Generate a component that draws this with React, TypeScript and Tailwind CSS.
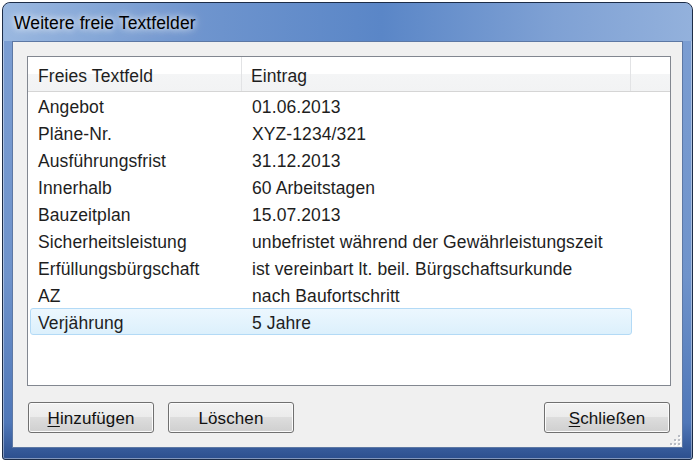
import React from 'react';

const rows: [string, string][] = [
  ['Angebot', '01.06.2013'],
  ['Pläne-Nr.', 'XYZ-1234/321'],
  ['Ausführungsfrist', '31.12.2013'],
  ['Innerhalb', '60 Arbeitstagen'],
  ['Bauzeitplan', '15.07.2013'],
  ['Sicherheitsleistung', 'unbefristet während der Gewährleistungszeit'],
  ['Erfüllungsbürgschaft', 'ist vereinbart lt. beil. Bürgschaftsurkunde'],
  ['AZ', 'nach Baufortschritt'],
  ['Verjährung', '5 Jahre'],
];

function DialogButton({ children, className = '' }: { children: React.ReactNode; className?: string }) {
  return (
    <button
      type="button"
      className={
        'w-[126px] h-[31px] rounded-[3px] border border-[#707070] shadow-[inset_0_0_0_1px_#fbfbfb] ' +
        'bg-[linear-gradient(to_bottom,#f2f2f2_0%,#ebebeb_50%,#dddddd_50%,#cfcfcf_100%)] ' +
        'flex items-center justify-center pt-[2px] text-[17px] tracking-[0.1px] text-[#111] ' +
        className
      }
    >
      {children}
    </button>
  );
}

export default function App() {
  return (
    <div className="w-[695px] h-[462px] bg-white p-[2px] font-['Liberation_Sans',Arial,sans-serif] text-[#1e1e1e]">
      <div className="w-[691px] h-[458px] rounded-t-[8px] rounded-b-[3px] border border-[#1c2c47] bg-[linear-gradient(to_bottom,#7d9fd3_0%,#6f93cb_60%,#4f77b8_92%,#2c4f8e_100%)] shadow-[inset_0_0_0_1px_rgba(255,255,255,0.4)] flex flex-col overflow-hidden">
        {/* title bar */}
        <div className="h-[38px] shrink-0 flex items-center pl-[11px] pt-[2px] rounded-t-[7px] bg-[linear-gradient(to_right,#9ab8e0_0%,#6f95ce_28%,#5a86c7_55%,#7fa1d4_80%,#93b1dc_100%)]">
          <span className="text-[17.5px] tracking-[0.1px] text-black [text-shadow:0_0_6px_rgba(255,255,255,0.95),0_0_12px_rgba(255,255,255,0.7)]">
            Weitere freie Textfelder
          </span>
        </div>

        {/* client area */}
        <div className="relative mx-[9px] h-[407px] border border-[#5d78a4] bg-[#f0f0f0] pt-[14px] pl-[14px] pr-[11px] flex flex-col">
          <div className="h-[330px] border border-[#828790] bg-white flex flex-col">
            {/* header */}
            <div className="h-[35px] shrink-0 flex border-b border-[#d5d5d5] bg-[linear-gradient(to_bottom,#ffffff_0%,#ffffff_50%,#f4f5f6_50%,#f2f3f4_100%)] text-[17.5px] tracking-[0.1px]">
              <div className="w-[214px] flex items-center pl-[10px] pt-[4px] border-r border-[#e2e3e5]">Freies Textfeld</div>
              <div className="w-[389px] flex items-center pl-[9px] pt-[4px] border-r border-[#e2e3e5]">Eintrag</div>
              <div className="flex-1" />
            </div>
            {/* rows */}
            <div className="flex flex-col">
              {rows.map(([k, v], i) => (
                <div
                  key={k}
                  className={
                    i === rows.length - 1
                      ? 'ml-[2px] w-[602px] h-[27px] flex items-center pt-[3px] rounded-[3px] border border-[#b3daf6] bg-[linear-gradient(to_bottom,#ecf7fe_0%,#dcf0fc_100%)] text-[17.5px] tracking-[0.1px]'
                      : 'ml-[2px] w-[602px] h-[27px] flex items-center pt-[3px] rounded-[3px] border border-transparent text-[17.5px] tracking-[0.1px]'
                  }
                >
                  <div className="w-[211px] pl-[7px] whitespace-nowrap">{k}</div>
                  <div className="pl-[10px] whitespace-nowrap">{v}</div>
                </div>
              ))}
            </div>
          </div>

          {/* buttons */}
          <div className="mt-[16px] flex items-center pl-[1px] pr-[1px]">
            <DialogButton>
              <span><span className="underline underline-offset-2">H</span>inzufügen</span>
            </DialogButton>
            <DialogButton className="ml-[14px]">Löschen</DialogButton>
            <div className="flex-1" />
            <DialogButton>
              <span><span className="underline underline-offset-2">S</span>chließen</span>
            </DialogButton>
          </div>

          {/* size grip */}
          <svg className="absolute right-[1px] bottom-[1px]" width="12" height="12" viewBox="0 0 12 12">
            {[
              [9, 1],
              [9, 5],
              [5, 5],
              [9, 9],
              [5, 9],
              [1, 9],
            ].map(([x, y], i) => (
              <g key={i}>
                <rect x={x + 1} y={y + 1} width="2" height="2" fill="#ffffff" />
                <rect x={x} y={y} width="2" height="2" fill="#b8bcc4" />
              </g>
            ))}
          </svg>
        </div>
        <div className="flex-1" />
      </div>
    </div>
  );
}
